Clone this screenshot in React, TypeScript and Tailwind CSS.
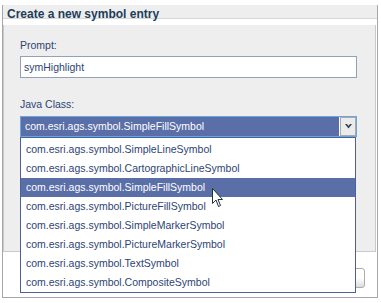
import { useState } from 'react'

const classes = [
	'com.esri.ags.symbol.SimpleLineSymbol',
	'com.esri.ags.symbol.CartographicLineSymbol',
	'com.esri.ags.symbol.SimpleFillSymbol',
	'com.esri.ags.symbol.PictureFillSymbol',
	'com.esri.ags.symbol.SimpleMarkerSymbol',
	'com.esri.ags.symbol.PictureMarkerSymbol',
	'com.esri.ags.symbol.TextSymbol',
	'com.esri.ags.symbol.CompositeSymbol',
]

// mouse pointer drawn over the open list
function Cursor() {
	return (
		<svg width="13" height="20" viewBox="0 0 13 20" className="absolute left-[212px] top-[188px]">
			<path
				d="M0.5 0.5 L0.5 15.5 L4 12 L6.5 18.5 L8.5 17.5 L6 11.5 L10.5 11.5 Z"
				fill="#ffffff"
				stroke="#1d3434"
				strokeWidth="1"
				strokeLinejoin="miter"
			/>
		</svg>
	)
}

export default function App() {
	const [prompt, setPrompt] = useState('symHighlight')
	const [selected, setSelected] = useState(2)

	return (
		<div
			className="relative w-[381px] h-[303px] bg-white pt-[5px] pl-[2px] pr-[3px] pb-[5px] overflow-hidden text-[#2d4474]"
			style={{ fontFamily: '"Liberation Sans", Arial, sans-serif' }}>
			<div className="flex flex-col h-full border-x border-b border-[#aaa2ac]">
				{/* Title bar */}
				<div className="h-[14px] bg-[#eeeeee] border-b border-[#d8d8d8] pl-[4px]">
					<div className="relative text-[12px] font-bold leading-[12px] pt-[3px] text-[#1e3d5b]">
						Create a new symbol entry
					</div>
				</div>
				<div className="h-[6px] bg-white" />

				{/* Form panel */}
				<div className="h-[227px] bg-[#eeeeee] border-x border-b border-[#c9c9c9] mr-[1px] pl-[16px] pr-[18px] pt-[13px]">
					<div className="text-[10.5px] leading-[14px]">Prompt:</div>
					<input
						type="text"
						value={prompt}
						onChange={(e) => setPrompt(e.target.value)}
						className="mt-[4px] w-full h-[22px] bg-white border border-[#91a1b8] px-[3px] text-[10.5px] text-[#2d4474] outline-none"
					/>
					<div className="mt-[19px] text-[10.5px] leading-[14px]">Java Class:</div>
					<div className="mt-[5px] h-[21px] flex border border-[#6aa6de] bg-white">
						<div className="flex-1 bg-[#5a6ea8] text-white text-[10.5px] leading-[19px] pl-[4px] mr-[1px]">
							{classes[selected]}
						</div>
						<div className="w-[16px] h-[19px] bg-[#ebebeb] border border-[#a9a9a9] flex items-center justify-center">
							<svg width="7" height="5" viewBox="0 0 7 5">
								<path d="M0 0 L3.5 4.5 L7 0 L5 0 L3.5 2 L2 0 Z" fill="#2f3f4f" />
							</svg>
						</div>
					</div>
				</div>

				{/* Button row, mostly hidden under the list */}
				<div className="flex justify-end pr-[12px] pt-[16px]">
					<div className="w-[80px] h-[20px] rounded-[3px] border border-[#b0a8b0] bg-gradient-to-b from-white from-50% to-[#dcdcdc]" />
				</div>
			</div>

			{/* Open dropdown list */}
			<div className="absolute left-[20px] top-[137px] w-[336px] h-[156px] bg-white border border-[#4c619c] pt-[2px]">
				{classes.map((c, i) => (
					<div
						key={c}
						onClick={() => setSelected(i)}
						className={
							i === selected
								? 'h-[19px] leading-[19px] pl-[5px] text-[10.5px] bg-[#5a6ea8] text-white'
								: 'h-[19px] leading-[19px] pl-[5px] text-[10.5px] text-[#2d4474]'
						}>
						{c}
					</div>
				))}
			</div>

			<Cursor />
		</div>
	)
}
